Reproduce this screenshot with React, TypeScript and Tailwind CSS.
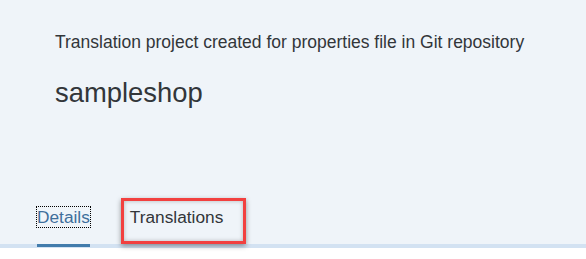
export default function App() {
  return (
    <div className="w-[586px] h-[259px] bg-white font-['Liberation_Sans',Arial,sans-serif] text-[#32363a] overflow-hidden">
      <div className="flex flex-col h-[248px] bg-[#eff4f9]">
        <div className="pl-[55px] pt-[32px]">
          <p className="text-[17.5px] leading-[20px]">
            Translation project created for properties file in Git repository
          </p>
          <h1 className="mt-[25px] text-[27.4px] leading-[31px]">sampleshop</h1>
        </div>

        <div className="mt-auto flex items-end pl-[37px] border-b-4 border-[#d3e2f2]">
          <div className="-mb-[3px] pb-[17px] border-b-[3px] border-[#427cac]">
            <span className="block text-[17.3px] leading-[20px] text-[#3f6f9c] outline-1 outline-dotted outline-black outline-offset-0">
              Details
            </span>
          </div>

          <div className="ml-[31px] border-[3px] border-[#f2403f] pl-[6px] pr-[20px] pt-[6px] pb-[14px] shadow-[0_2px_5px_rgba(0,0,0,0.4),inset_0_0_4px_rgba(0,0,0,0.25)]">
            <span className="block text-[17.3px] leading-[20px]">Translations</span>
          </div>
        </div>
      </div>
    </div>
  );
}
